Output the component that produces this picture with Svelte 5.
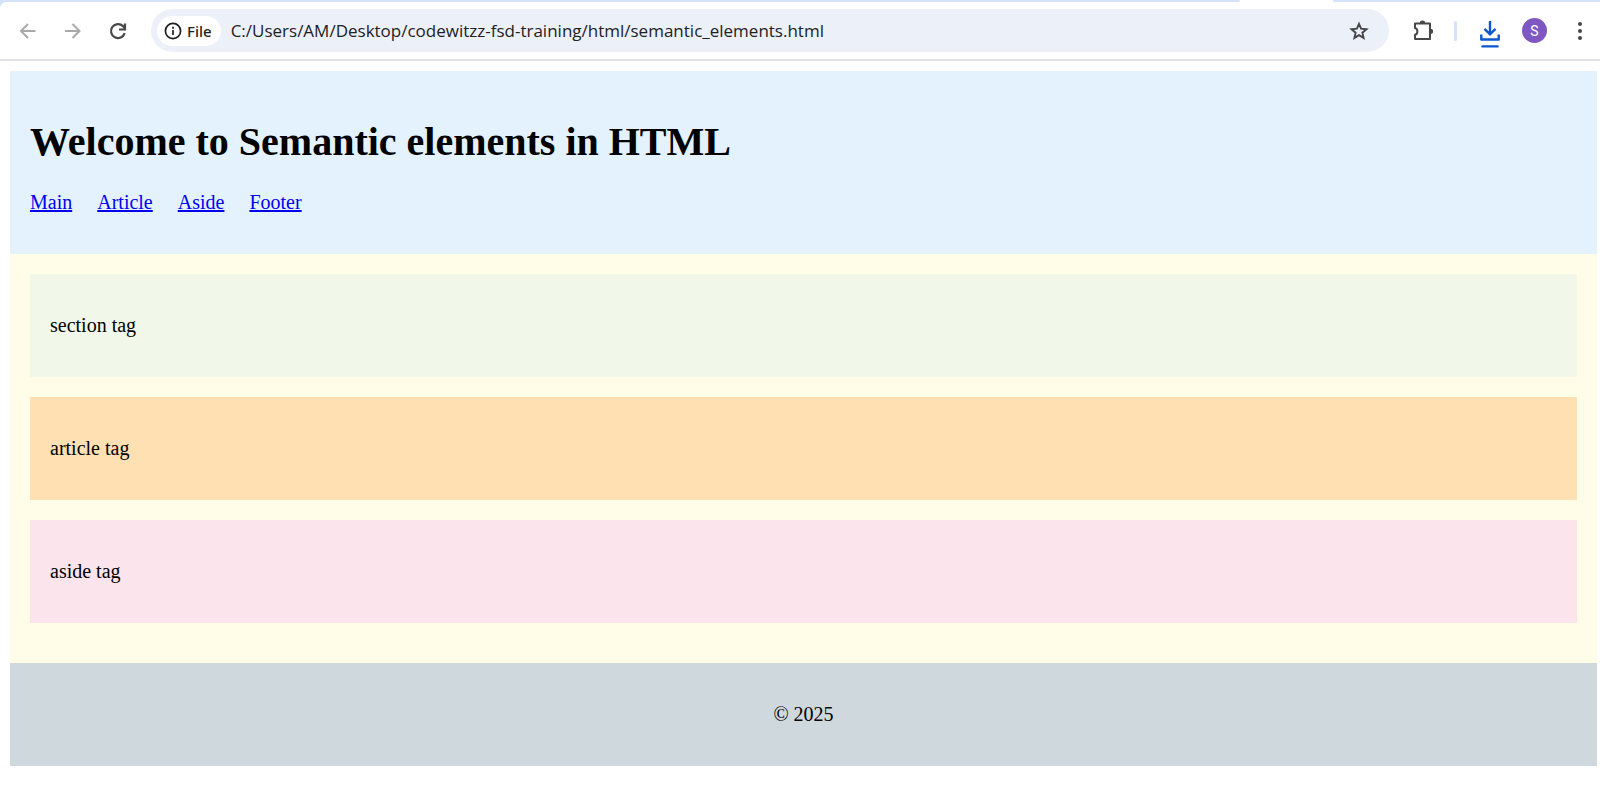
<script>
  const links = [
    { label: 'Main', href: '#main' },
    { label: 'Article', href: '#article' },
    { label: 'Aside', href: '#aside' },
    { label: 'Footer', href: '#footer' }
  ];
  let address = $state('C:/Users/AM/Desktop/codewitzz-fsd-training/html/semantic_elements.html');
</script>

<div class="tabstrip"><span class="tabs-left"></span><span class="tabs-right"></span></div>
<div class="toolbar">
  <div class="nav-buttons">
    <button aria-label="Back" disabled>
      <svg width="20" height="20" viewBox="0 0 20 20" fill="none" stroke="#a9a9a9" stroke-width="2"><path d="M17.5 10H3.500M10 3L3 10l7 7" /></svg>
    </button>
    <button aria-label="Forward" disabled>
      <svg width="20" height="20" viewBox="0 0 20 20" fill="none" stroke="#a9a9a9" stroke-width="2"><path d="M2 10h14M9.500 3l7 7-7 7" /></svg>
    </button>
    <button aria-label="Reload">
      <svg width="20" height="20" viewBox="0 0 20 20" fill="none" stroke="#474747" stroke-width="2.200"><path d="M16.700 12.200A7 7 0 1 1 15 5.100L17 7.600M17 2.500v6h-6" /></svg>
    </button>
  </div>

  <div class="omnibox">
    <button class="chip">
      <svg width="18" height="18" viewBox="0 0 18 18" fill="none" stroke="#1f1f1f" stroke-width="1.700"><circle cx="9" cy="9" r="7.600" /><path d="M9 8v5M9 4.800v1.900" /></svg>
      File
    </button>
    <input type="text" aria-label="Address" bind:value={address} spellcheck="false" />
    <button class="star" aria-label="Bookmark this page">
      <svg width="20" height="20" viewBox="0 0 20 20" fill="none" stroke="#474747" stroke-width="1.900"><path d="M10 2.800l2.100 4.900 5.400.5-4.100 3.500 1.200 5.200L10 14.100l-4.600 2.800 1.200-5.200-4.100-3.500 5.400-.5z" /></svg>
    </button>
  </div>

  <div class="actions">
    <button aria-label="Extensions">
      <svg width="22" height="22" viewBox="0 0 22 22"><path d="M3 3.500h15v15.500H3v-4.200c3.200-.8 3.200-6 0-6.800z" fill="none" stroke="#474747" stroke-width="2" stroke-linejoin="round" /><path d="M7.900 3a2.600 2.400 0 0 1 5.200 0zM18.700 8.700a2.400 2.600 0 0 1 0 5.200z" fill="#474747" /></svg>
    </button>
    <span class="divider"></span>
    <button class="downloads" aria-label="Downloads">
      <svg width="22" height="28" viewBox="0 0 22 28" fill="none" stroke="#0b57d0" stroke-width="2.400"><path d="M11 1v13M5.500 8.800L11 14.300l5.500-5.500" /><path d="M2.300 14.500v5h17.400v-5" stroke-linejoin="round" /><path d="M3.500 26.400h15" stroke-linecap="round" /></svg>
    </button>
    <button class="avatar" aria-label="Profile">S</button>
    <button aria-label="Menu">
      <svg width="20" height="20" viewBox="0 0 20 20" fill="#474747"><circle cx="10" cy="3" r="2" /><circle cx="10" cy="10" r="2" /><circle cx="10" cy="17" r="2" /></svg>
    </button>
  </div>
</div>

<div class="page">
  <header>
    <h1>Welcome to Semantic elements in HTML</h1>
    <nav>
      {#each links as link}
        <a href={link.href}>{link.label}</a>
      {/each}
    </nav>
  </header>
  <main id="main">
    <section><p>section tag</p></section>
    <article id="article"><p>article tag</p></article>
    <aside id="aside"><p>aside tag</p></aside>
  </main>
  <footer id="footer"><p>© 2025</p></footer>
</div>

<style>
  :global(body) {
    margin: 0;
    background: #fff;
  }

  button {
    display: flex;
    align-items: center;
    justify-content: center;
    margin: 0;
    padding: 0;
    border: 0;
    background: none;
    font-family: 'Noto Sans', sans-serif;
  }

  svg {
    display: block;
    flex: none;
  }

  .tabstrip {
    display: flex;
    justify-content: space-between;
    height: 2px;
  }

  .tabs-left {
    flex: 1;
    margin-right: 93px;
    border-bottom-right-radius: 2px;
    background: #d5e2fb;
  }

  .tabs-right {
    width: 267px;
    border-bottom-left-radius: 2px;
    background: #d5e2fb;
  }

  .toolbar {
    display: flex;
    align-items: center;
    height: 57px;
    border-bottom: 2px solid #e1e3e6;
    background: radial-gradient(circle at 8px 8px, #fff 8px, #d5e2fb 9px) 0 0 / 8px 8px no-repeat;
  }

  .nav-buttons {
    display: flex;
    gap: 25px;
    padding: 0 23px 0 18px;
  }

  .omnibox {
    display: flex;
    flex: 1;
    align-items: center;
    box-sizing: border-box;
    height: 43px;
    padding: 0 20px 0 6px;
    border-radius: 22px;
    background: #ebf0f9;
  }

  .chip {
    gap: 5px;
    height: 30px;
    padding: 0 9px 0 7px;
    border-radius: 15px;
    background: #fff;
    color: #1f1f1f;
    font-size: 15px;
    font-weight: 500;
  }

  input {
    flex: 1;
    min-width: 0;
    margin: 0;
    padding: 0 10px;
    border: 0;
    outline: 0;
    background: none;
    color: #1f2124;
    font: 17px/24px 'Open Sans', sans-serif;
  }

  .actions {
    display: flex;
    align-items: center;
    padding: 0 10px 0 23px;
  }

  .divider {
    width: 3px;
    height: 20px;
    margin: 0 22px 0 20px;
    border-radius: 2px;
    background: #d3e3fd;
  }

  .downloads {
    padding-top: 6px;
  }

  .avatar {
    width: 25px;
    height: 25px;
    margin: 0 23px 0 21px;
    border-radius: 50%;
    background: #7e57c2;
    color: #fff;
    font: 14px Roboto, sans-serif;
  }

  .page {
    margin: 10px 3px 0 10px;
    color: #000;
    font: 20px/23px 'Liberation Serif', serif;
  }

  header {
    padding: 47px 20px 40px;
    background: #e3f2fd;
  }

  h1 {
    margin: 0 0 25px;
    font-size: 40px;
    line-height: 48px;
  }

  nav {
    display: flex;
    gap: 25px;
  }

  a {
    color: #0000ee;
  }

  main {
    display: grid;
    gap: 20px;
    padding: 20px 20px 40px;
    background: #fffde7;
  }

  section,
  article,
  aside,
  footer {
    padding: 20px;
  }

  p {
    margin: 20px 0;
  }

  section {
    background: #f1f8e9;
  }

  article {
    background: #ffe0b2;
  }

  aside {
    background: #fce4ec;
  }

  footer {
    background: #cfd8dc;
    text-align: center;
  }
</style>
